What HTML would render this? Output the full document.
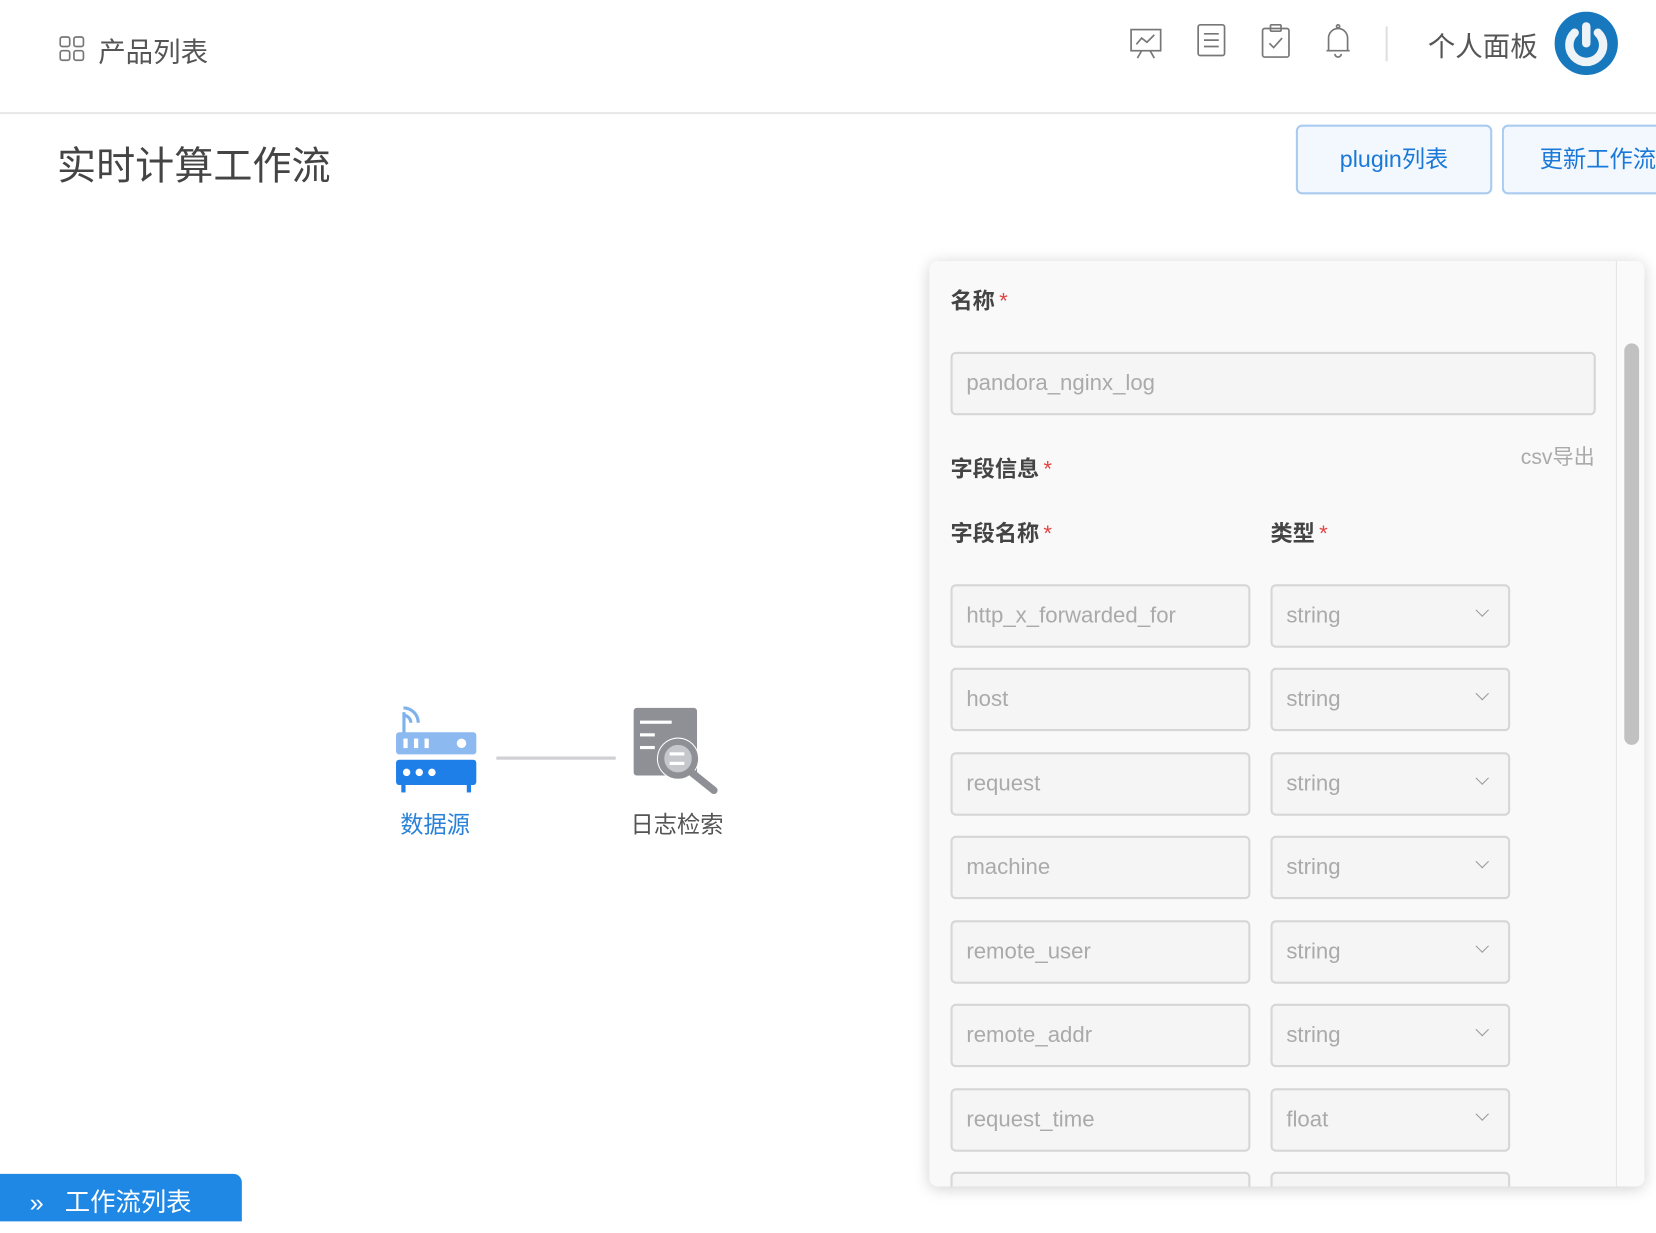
<!DOCTYPE html>
<html><head><meta charset="utf-8">
<style>
html,body{margin:0;padding:0;width:1656px;height:1214px;overflow:hidden;background:#fff;}
#w{position:absolute;left:0;top:0;width:1568px;height:1150px;transform:scale(1.0561,1.0566);transform-origin:0 0;font-family:"Liberation Sans","Noto Sans CJK SC",sans-serif;}
.a{position:absolute;}
.hdr{left:0;top:0;width:1568px;height:106px;border-bottom:2px solid #e8e8e8;}
.btn{background:#f2f8fe;border:2px solid #a9cbef;border-radius:6px;color:#1a78d8;font-size:22px;text-align:center;line-height:62px;height:62px;}
.panel{left:880px;top:247px;width:677px;height:876px;background:#f9f9fa;border-radius:8px;box-shadow:0 2px 14px rgba(0,0,0,.18);overflow:hidden;}
.lbl{font-size:21px;font-weight:bold;color:#444;}
.lbl i{color:#e04545;font-style:normal;font-weight:normal;margin-left:4px;}
.in{background:#f5f5f5;border:2px solid #d6d6d6;border-radius:5px;height:56px;box-sizing:border-box;color:#aaa;font-size:21px;line-height:52px;padding-left:13px;}
.chev{position:absolute;right:20px;top:18px;width:8px;height:8px;border-right:1.5px solid #999;border-bottom:1.5px solid #999;transform:rotate(45deg);}
</style></head><body><div id="w">
<div class="a hdr"></div>
<svg class="a" style="left:56px;top:34px" width="25" height="25" viewBox="0 0 25 25" fill="none" stroke="#777" stroke-width="1.6"><rect x="1" y="1" width="9" height="9" rx="2"/><rect x="14" y="1" width="9" height="9" rx="2"/><rect x="1" y="14" width="9" height="9" rx="2"/><rect x="14" y="14" width="9" height="9" rx="2"/></svg>
<div class="a" style="left:93px;top:29px;font-size:26px;color:#555;">产品列表</div>
<svg class="a" style="left:1069px;top:24px" width="32" height="34" viewBox="0 0 32 34" fill="none" stroke="#777" stroke-width="1.6"><rect x="2" y="4" width="28" height="20"/><polyline points="7,18 12,12 17,16 24,9"/><line x1="12" y1="24" x2="8" y2="31"/><line x1="20" y1="24" x2="24" y2="31"/></svg>
<svg class="a" style="left:1133px;top:22px" width="28" height="32" viewBox="0 0 28 32" fill="none" stroke="#777" stroke-width="1.6"><rect x="1.5" y="1.5" width="25" height="29" rx="2"/><line x1="7" y1="10" x2="21" y2="10"/><line x1="7" y1="16" x2="21" y2="16"/><line x1="7" y1="22" x2="21" y2="22"/></svg>
<svg class="a" style="left:1194px;top:22px" width="28" height="34" viewBox="0 0 28 34" fill="none" stroke="#777" stroke-width="1.6"><rect x="1.5" y="5" width="25" height="27" rx="2"/><rect x="9" y="1.5" width="10" height="6" rx="1"/><polyline points="8,19 12,23 20,14"/></svg>
<svg class="a" style="left:1253px;top:22px" width="28" height="36" viewBox="0 0 28 36" fill="none" stroke="#777" stroke-width="1.6"><path d="M5 26 V14 a9 9 0 0 1 18 0 V26 H3 H25"/><circle cx="14" cy="3" r="1.5"/><path d="M11 29 a3 3 0 0 0 6 0"/></svg>
<div class="a" style="left:1312px;top:25px;width:2px;height:33px;background:#e0e0e0"></div>
<div class="a" style="left:1352px;top:24px;font-size:26px;color:#555;">个人面板</div>
<svg class="a" style="left:1472px;top:11px" width="60" height="60" viewBox="0 0 60 60"><circle cx="30" cy="30" r="30" fill="#1878be"/><path d="M19 20 A16 16 0 1 0 41 20" fill="none" stroke="#eef3f8" stroke-width="8" stroke-linecap="round"/><line x1="30" y1="14" x2="30" y2="30" stroke="#eef3f8" stroke-width="8" stroke-linecap="round"/></svg>
<div class="a" style="left:54px;top:127px;font-size:37px;color:#444;">实时计算工作流</div>
<div class="a btn" style="left:1227px;top:118px;width:182px;">plugin列表</div>
<div class="a btn" style="left:1422px;top:118px;width:200px;text-align:left;padding-left:34px;">更新工作流</div>
<svg class="a" style="left:372px;top:666px" width="82" height="86" viewBox="0 0 82 86"><path d="M10 4 a14 14 0 0 1 14 14" fill="none" stroke="#7fb2ea" stroke-width="3"/><path d="M10 11 a7 7 0 0 1 7 7" fill="none" stroke="#7fb2ea" stroke-width="3"/><rect x="9" y="8" width="3" height="20" fill="#7fb2ea"/><rect x="3" y="27" width="76" height="21" rx="3" fill="#8cbaf0"/><rect x="10" y="33" width="4" height="9" fill="#fff"/><rect x="20" y="33" width="4" height="9" fill="#fff"/><rect x="30" y="33" width="4" height="9" fill="#fff"/><circle cx="65" cy="37.5" r="4.5" fill="#fff"/><rect x="3" y="53" width="76" height="24" rx="3" fill="#1f7fe8"/><circle cx="13" cy="65" r="3.5" fill="#fff"/><circle cx="25" cy="65" r="3.5" fill="#fff"/><circle cx="37" cy="65" r="3.5" fill="#fff"/><rect x="8" y="74" width="4" height="10" fill="#1f7fe8"/><rect x="70" y="74" width="4" height="10" fill="#1f7fe8"/></svg>
<div class="a" style="left:470px;top:716px;width:113px;height:3px;background:#cfd0d4"></div>
<svg class="a" style="left:598px;top:668px" width="84" height="86" viewBox="0 0 84 86"><rect x="2" y="2" width="60" height="64" rx="3" fill="#8e9096"/><rect x="8" y="14" width="30" height="3" fill="#fff"/><rect x="8" y="26" width="14" height="3" fill="#fff"/><rect x="8" y="38" width="14" height="3" fill="#fff"/><circle cx="44" cy="50" r="20" fill="#fff"/><circle cx="44" cy="50" r="16" fill="#c5c7cc" stroke="#8e9096" stroke-width="6"/><rect x="36" y="44" width="14" height="3" fill="#fff"/><rect x="36" y="53" width="14" height="3" fill="#fff"/><line x1="58" y1="64" x2="78" y2="80" stroke="#8e9096" stroke-width="7" stroke-linecap="round"/></svg>
<div class="a" style="left:379px;top:763px;font-size:22px;color:#2a82d8;">数据源</div>
<div class="a" style="left:597px;top:763px;font-size:22px;color:#555;">日志检索</div>
<div class="a panel">
 <div class="a" style="left:650px;top:0;width:27px;height:876px;background:#fafafa;border-left:1px solid #e4e4e4"></div>
 <div class="a" style="left:658px;top:78px;width:14px;height:380px;background:#c1c1c1;border-radius:7px"></div>
 <div class="a lbl" style="left:20px;top:22px">名称<i>*</i></div>
 <div class="a in" style="left:20px;top:86px;width:611px;height:60px;line-height:56px">pandora_nginx_log</div>
 <div class="a" style="right:47px;top:169px;font-size:20px;color:#aaa">csv导出</div>
 <div class="a lbl" style="left:20px;top:181px">字段信息<i>*</i></div>
 <div class="a lbl" style="left:20px;top:242px">字段名称<i>*</i></div>
 <div class="a lbl" style="left:323px;top:242px">类型<i>*</i></div>
 <div class="a in" style="left:20px;top:306px;width:284px;height:60px;line-height:56px">http_x_forwarded_for</div>
 <div class="a in" style="left:323px;top:306px;width:227px;height:60px;line-height:56px">string<span class="chev"></span></div>
 <div class="a in" style="left:20px;top:385px;width:284px;height:60px;line-height:56px">host</div>
 <div class="a in" style="left:323px;top:385px;width:227px;height:60px;line-height:56px">string<span class="chev"></span></div>
 <div class="a in" style="left:20px;top:465px;width:284px;height:60px;line-height:56px">request</div>
 <div class="a in" style="left:323px;top:465px;width:227px;height:60px;line-height:56px">string<span class="chev"></span></div>
 <div class="a in" style="left:20px;top:544px;width:284px;height:60px;line-height:56px">machine</div>
 <div class="a in" style="left:323px;top:544px;width:227px;height:60px;line-height:56px">string<span class="chev"></span></div>
 <div class="a in" style="left:20px;top:624px;width:284px;height:60px;line-height:56px">remote_user</div>
 <div class="a in" style="left:323px;top:624px;width:227px;height:60px;line-height:56px">string<span class="chev"></span></div>
 <div class="a in" style="left:20px;top:703px;width:284px;height:60px;line-height:56px">remote_addr</div>
 <div class="a in" style="left:323px;top:703px;width:227px;height:60px;line-height:56px">string<span class="chev"></span></div>
 <div class="a in" style="left:20px;top:783px;width:284px;height:60px;line-height:56px">request_time</div>
 <div class="a in" style="left:323px;top:783px;width:227px;height:60px;line-height:56px">float<span class="chev"></span></div>
 <div class="a in" style="left:20px;top:862px;width:284px;height:60px;"></div>
 <div class="a in" style="left:323px;top:862px;width:227px;height:60px;"></div>
</div>
<div class="a" style="left:0;top:1111px;width:229px;height:45px;background:#1f88e5;border-radius:0 8px 0 0;color:#fff;font-size:24px;line-height:56px;padding-left:28px;box-sizing:border-box;">»&nbsp;&nbsp; 工作流列表</div>
</div></body></html>
